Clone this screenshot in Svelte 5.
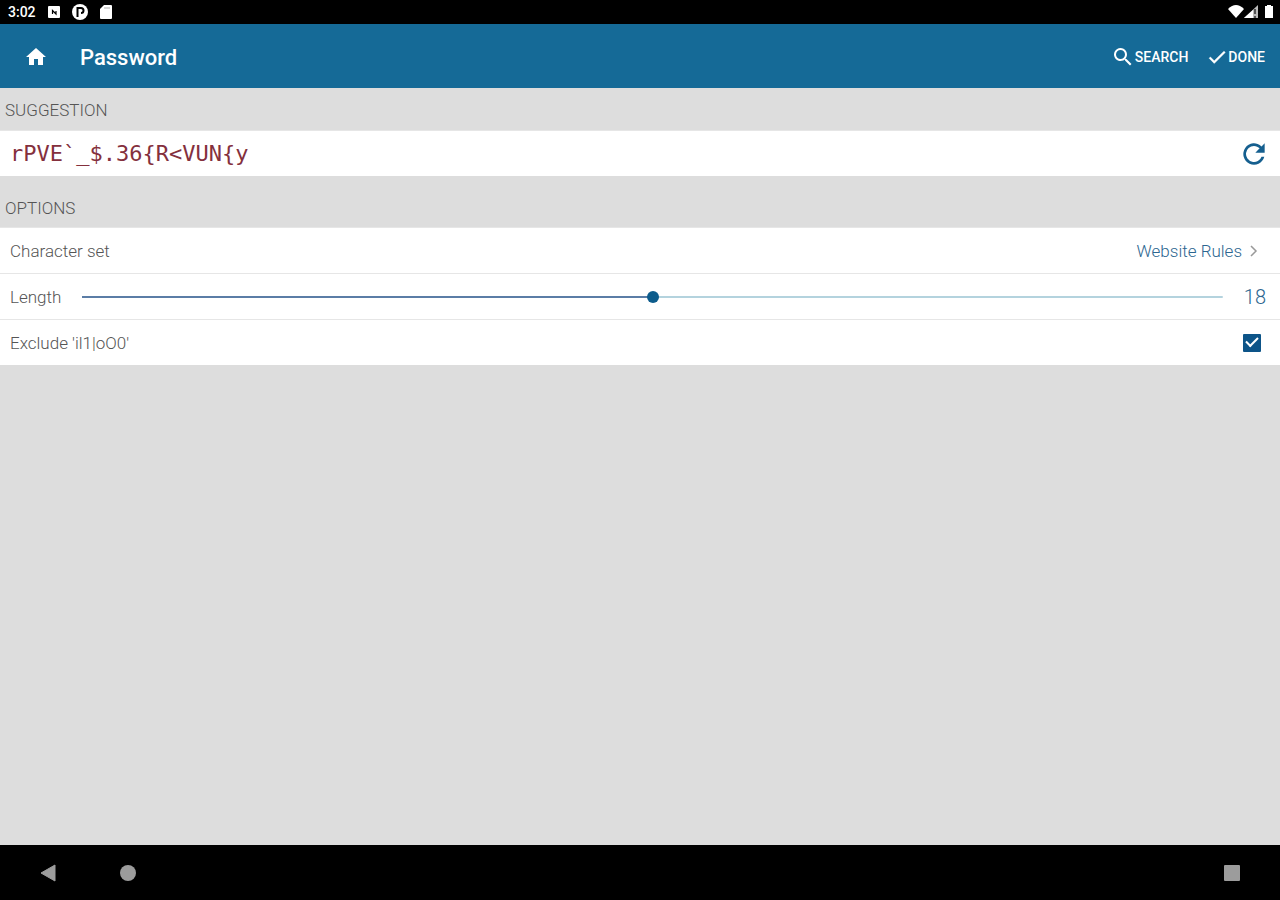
<script>
  const min = 4;
  const max = 32;

  let password = $state("rPVE`_$.36{R<VUN{y");
  let length = $state(18);
  let exclude = $state(true);

  let filled = $derived(((length - min) / (max - min)) * 100);

  function generate() {
    let chars = "ABCDEFGHIJKLMNOPQRSTUVWXYZabcdefghijklmnopqrstuvwxyz0123456789`_$.{<";
    if (exclude) {
      chars = chars.replace(/[il1oO0]/g, "");
    }
    password = Array.from(
      { length },
      () => chars[Math.floor(Math.random() * chars.length)]
    ).join("");
  }
</script>

<div class="screen">
  <div class="status">
    <span class="clock">3:02</span>
    <svg width="12" height="12" viewBox="0 0 12 12">
      <rect width="12" height="12" rx="1" fill="#fff" />
      <path d="M4.500 8V4.500L8 8V5" fill="none" stroke="#000" stroke-width="1.200" />
    </svg>
    <svg width="16" height="16" viewBox="0 0 16 16">
      <circle cx="8" cy="8" r="8" fill="#fff" />
      <path d="M5.500 13V4H9q2.500 0 2.500 2.500T9 9" fill="none" stroke="#000" stroke-width="2" />
    </svg>
    <svg width="12" height="14" viewBox="0 0 12 14">
      <path d="M4 0h7q1 0 1 1v12q0 1-1 1H1q-1 0-1-1V4z" fill="#fff" />
      <path d="M5 2v2M7 2v2M9 2v2" stroke="#aaa" />
    </svg>
    <span class="grow"></span>
    <svg width="46" height="16" viewBox="0 0 46 16">
      <path d="M0 5Q8-3 16 5L8 14z" fill="#fff" />
      <path d="M30 1v13H16z" fill="#bbb" />
      <path d="M25 6v8h-9z" fill="#fff" />
      <path d="M27 5v5M27 12v2" stroke="#333" stroke-width="1.500" />
      <path d="M37 2h2V1h4v1h2v12h-8z" fill="#fff" />
    </svg>
  </div>

  <header>
    <button class="home" aria-label="Home">
      <svg width="24" height="24" viewBox="0 0 24 24">
        <path d="M10 20v-6h4v6h5v-8h3L12 3 2 12h3v8z" fill="#fff" />
      </svg>
    </button>
    <h1>Password</h1>
    <button class="action">
      <svg width="24" height="24" viewBox="0 0 24 24">
        <path
          d="M15.500 14h-.79l-.28-.27A6.500 6.500 0 1 0 13.730 14.430l.27.280v.79l5 4.990L20.490 19zM9.500 14a4.500 4.500 0 1 1 0-9 4.500 4.500 0 0 1 0 9z"
          fill="#fff" />
      </svg>
      SEARCH
    </button>
    <button class="action">
      <svg width="22" height="22" viewBox="0 0 24 24">
        <path d="M9 16.200 4.800 12l-1.400 1.400L9 19 21 7l-1.400-1.400z" fill="#fff" stroke="#fff" stroke-width=".5" />
      </svg>
      DONE
    </button>
  </header>

  <main>
    <h2>SUGGESTION</h2>
    <div class="row">
      <output class="password">{password}</output>
      <button class="refresh" aria-label="Refresh" onclick={generate}>
        <svg width="32" height="32" viewBox="0 0 24 24">
          <path
            d="M17.650 6.350A8 8 0 1 0 19.730 14h-2.080A6 6 0 1 1 12 6c1.660 0 3.140.69 4.220 1.780L13 11h7V4z"
            fill="#155f8f" />
        </svg>
      </button>
    </div>

    <h2 class="options">OPTIONS</h2>
    <div class="row">
      <span>Character set</span>
      <button class="link">
        Website Rules
        <svg width="8" height="14" viewBox="0 0 8 14">
          <path d="M1 2l5 5-5 5" fill="none" stroke="#999" stroke-width="1.500" />
        </svg>
      </button>
    </div>
    <div class="row">
      <label for="length">Length</label>
      <input
        id="length"
        type="range"
        {min}
        {max}
        bind:value={length}
        style="--filled: {filled}%" />
      <output class="value" for="length">{length}</output>
    </div>
    <div class="row">
      <label for="exclude">Exclude 'il1|oO0'</label>
      <input id="exclude" type="checkbox" bind:checked={exclude} />
    </div>
  </main>

  <nav>
    <button aria-label="Back">
      <svg width="16" height="18" viewBox="0 0 16 18">
        <path d="M15 1v16L1 9z" fill="#9c9c9c" stroke="#9c9c9c" stroke-linejoin="round" />
      </svg>
    </button>
    <button aria-label="Home screen">
      <svg width="16" height="16" viewBox="0 0 16 16">
        <circle cx="8" cy="8" r="8" fill="#9c9c9c" />
      </svg>
    </button>
    <span class="grow"></span>
    <button aria-label="Recent apps">
      <svg width="16" height="16" viewBox="0 0 16 16">
        <rect width="16" height="16" rx="1" fill="#9c9c9c" />
      </svg>
    </button>
  </nav>
</div>

<style>
  :global(body) {
    margin: 0;
  }

  .screen {
    min-height: 100vh;
    display: flex;
    flex-direction: column;
    background: #ddd;
    color: #555;
    font-family: Roboto, sans-serif;
    font-size: 17px;
    font-weight: 300;
  }

  svg {
    display: block;
    flex: none;
  }

  button {
    display: flex;
    align-items: center;
    padding: 0;
    border: 0;
    background: none;
    color: inherit;
    font: inherit;
    cursor: pointer;
  }

  .grow {
    flex: 1;
  }

  .status {
    height: 24px;
    display: flex;
    align-items: center;
    gap: 12px;
    padding: 0 6px 0 8px;
    background: #000;
    color: #fff;
    font-size: 14px;
    font-weight: 500;
  }

  header {
    height: 62px;
    display: flex;
    align-items: center;
    gap: 18px;
    padding: 2px 15px 0 24px;
    background: #156a97;
    color: #fff;
  }

  h1 {
    flex: 1;
    margin: 0;
    padding-left: 14px;
    font-size: 22px;
    font-weight: 500;
  }

  .action {
    font-size: 14px;
    font-weight: 500;
  }

  main {
    flex: 1;
  }

  h2 {
    margin: 0;
    padding: 12px 5px 10px;
    font-size: 17px;
    font-weight: 300;
    line-height: 20px;
  }

  h2.options {
    padding: 22px 5px 9px;
  }

  .row {
    height: 45px;
    display: flex;
    align-items: center;
    justify-content: space-between;
    padding: 0 14px 0 10px;
    border-top: 1px solid #e6e6e6;
    background: #fff;
  }

  .password {
    color: #84303d;
    font-family: "DejaVu Sans Mono", monospace;
    font-size: 22px;
    font-weight: 400;
  }

  .refresh {
    margin-right: -4px;
  }

  .link {
    gap: 8px;
    margin-right: 8px;
    color: #2c6690;
  }

  .value {
    color: #2c6690;
    font-size: 20px;
  }

  input[type="range"] {
    flex: 1;
    height: 12px;
    margin: 0 21px;
    appearance: none;
    background: linear-gradient(to right, #5b7da6 var(--filled), #b4d3de var(--filled)) center / 100% 2px no-repeat;
  }

  input[type="range"]::-webkit-slider-thumb {
    width: 12px;
    height: 12px;
    appearance: none;
    border-radius: 50%;
    background: #0d5c8c;
  }

  input[type="checkbox"] {
    width: 18px;
    height: 18px;
    margin: 0 5px 0 0;
    appearance: none;
    border: 2px solid #0d5488;
    border-radius: 1px;
    display: grid;
    place-items: center;
  }

  input[type="checkbox"]:checked {
    background: #0d5488;
  }

  input[type="checkbox"]:checked::before {
    content: "";
    width: 10px;
    height: 5px;
    border: solid #fff;
    border-width: 0 0 2px 2px;
    transform: translateY(-2px) rotate(-45deg);
  }

  nav {
    height: 55px;
    display: flex;
    align-items: center;
    gap: 64px;
    padding: 0 40px;
    background: #000;
  }
</style>
